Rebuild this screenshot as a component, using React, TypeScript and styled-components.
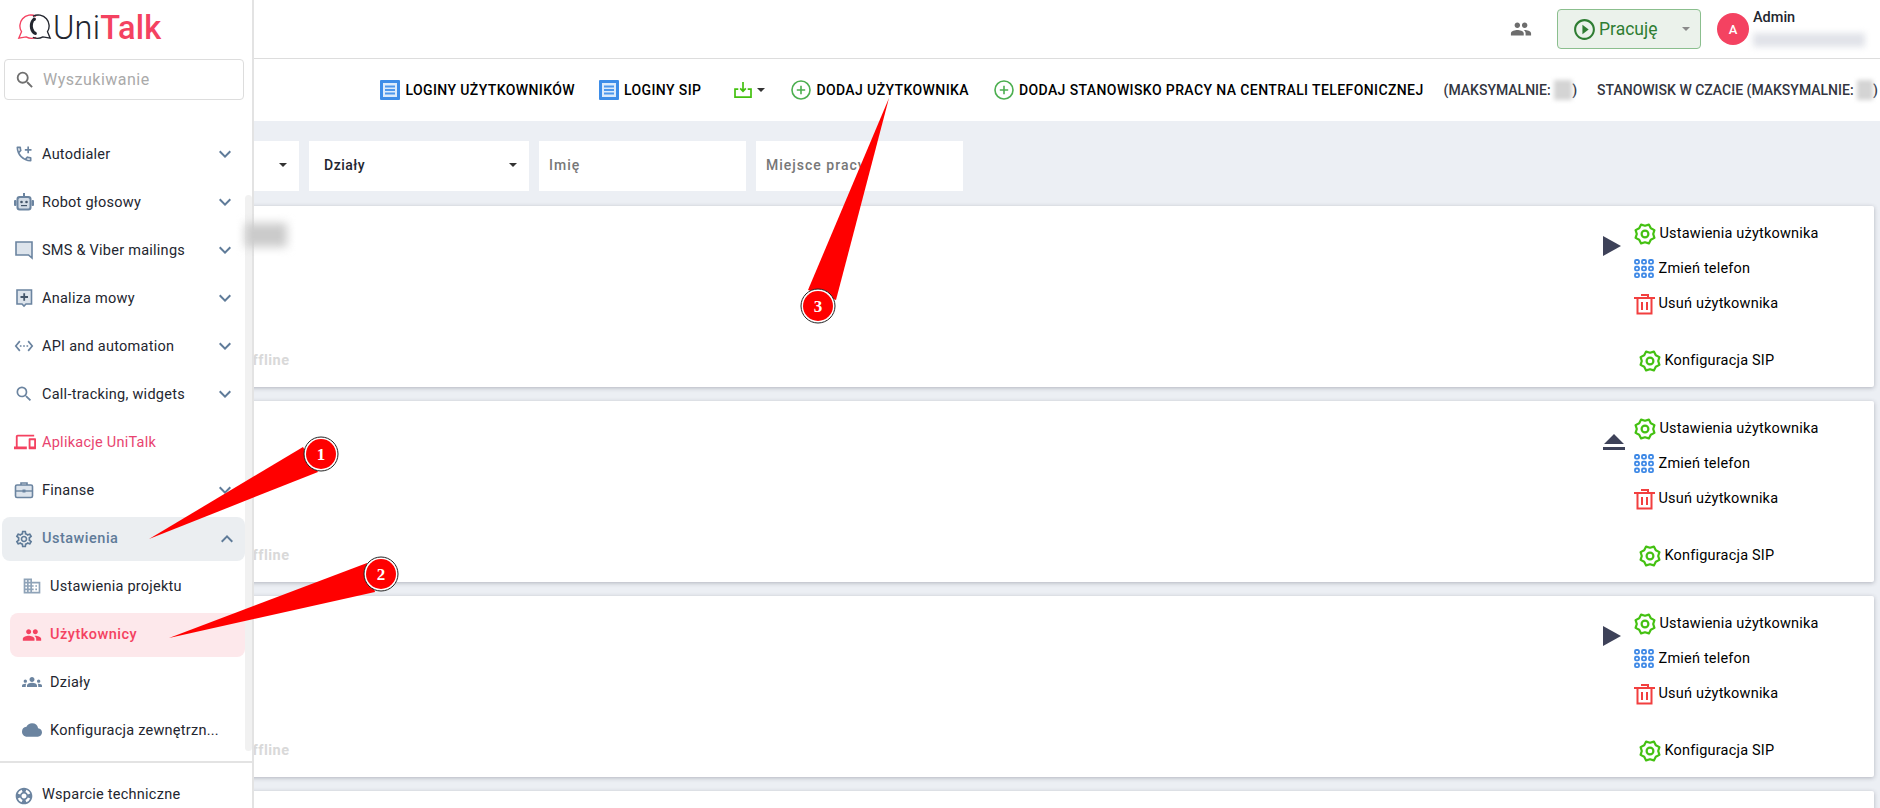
import React from 'react';
import styled, { createGlobalStyle } from 'styled-components';
import {
    MdOutlineAddIcCall, MdSettingsEthernet, MdSearch, MdOutlineDevices,
    MdOutlineSettings, MdBusiness, MdPeople, MdGroups, MdCloud, MdSupport, MdExpandMore, MdExpandLess,
    MdPlayCircleOutline,
} from 'react-icons/md';

const GlobalStyle = createGlobalStyle`
    html, body {
        margin: 0;
        padding: 0;
        height: 100%;
        background: #eceff4;
        font-family: Roboto, "Liberation Sans", sans-serif;
        color: #23262f;
    }
    * {
        box-sizing: border-box;
    }
`;

const Page = styled.div`
    position: relative;
    width: 100%;
    height: 100vh;
    overflow: hidden;
`;

const Sidebar = styled.aside`
    position: absolute;
    left: 0;
    top: 0;
    bottom: 0;
    width: 254px;
    background: #fff;
    border-right: 2px solid #e3e3e3;
    z-index: 2;
    display: flex;
    flex-direction: column;
`;

const LogoRow = styled.div`
    height: 59px;
    padding: 13px 0 0 17px;
    display: flex;
    align-items: flex-start;
    gap: 1px;
`;

const LogoText = styled.div`
    font-size: 32.5px;
    line-height: 30px;
    font-weight: 300;
    color: #23262f;
    letter-spacing: 0.2px;

    b {
        font-weight: 500;
        color: #f44261;
    }
`;

const SearchBox = styled.div`
    margin: 0 8px 0 4px;
    height: 41px;
    border: 1px solid #ddd;
    border-radius: 4px;
    display: flex;
    align-items: center;
    gap: 7px;
    padding-left: 9px;
    font-size: 16px;
    letter-spacing: 0.5px;
    color: #aaa;

    svg {
        color: #707070;
    }
`;

const Nav = styled.nav`
    margin-top: 30px;
    padding-right: 6px;
    flex: 1;
    display: flex;
    flex-direction: column;
    align-items: stretch;
`;

const NavItem = styled.div<{ $color?: string; $sub?: boolean; $active?: boolean; $open?: boolean }>`
    flex: none;
    height: ${(p) => (p.$open || p.$active ? '44px' : '48px')};
    margin: ${(p) => (p.$open || p.$active ? '3px 1px 1px ' + (p.$active ? '10px' : '2px') : '0')};
    padding-left: ${(p) => (p.$active ? '12px' : p.$sub ? '22px' : p.$open ? '12px' : '14px')};
    padding-right: ${(p) => (p.$open ? '11px' : '14px')};
    padding-bottom: ${(p) => (p.$open || p.$active ? '1px' : '0')};
    display: flex;
    align-items: center;
    gap: 8px;
    font-size: 14.5px;
    letter-spacing: ${(p) => (p.$active || p.$open ? '0.5px' : '0.25px')};
    font-weight: ${(p) => (p.$active || p.$open ? 500 : 400)};
    color: ${(p) => p.$color || '#23262f'};
    border-radius: 8px;
    background: ${(p) => (p.$active ? '#fde8eb' : p.$open ? '#ebeef1' : 'transparent')};

    > svg:first-child {
        flex: none;
        color: ${(p) => (p.$active ? '#f44261' : p.$color || '#6b84a0')};
    }
`;

const NavLabel = styled.span`
    flex: 1;
    white-space: nowrap;
`;

const Chevron = styled.span`
    display: flex;
    color: #5f7b99;
    margin-right: -5px;
`;

const SidebarFoot = styled.div`
    border-top: 2px solid #e3e3e3;
    height: 47px;
    padding: 23px 0 0 14px;
    display: flex;
    align-items: flex-start;
    gap: 8px;
    font-size: 14.5px;
    letter-spacing: 0.25px;

    svg {
        color: #6b84a0;
        flex: none;
    }
`;

const Scrollbar = styled.div`
    position: absolute;
    right: 0;
    top: 195px;
    width: 7px;
    height: 556px;
    border-radius: 4px;
    background: #f1f1f1;
`;

const Main = styled.main`
    display: flex;
    flex-direction: column;
`;

const Header = styled.header`
    height: 59px;
    background: #fff;
    border-bottom: 1px solid #ddd;
    display: flex;
    align-items: center;
    justify-content: flex-end;
    padding-right: 11px;
`;

const TeamIcon = styled.span`
    display: flex;
    color: #6d6d6d;
    margin-right: 25px;
`;

const StatusButton = styled.div`
    width: 144px;
    height: 40px;
    margin-right: 16px;
    display: flex;
    align-items: center;
    gap: 2px;
    padding: 0 10px 0 14px;
    background: #ebf2eb;
    border: 1px solid #8bbf8e;
    border-radius: 4px;
    color: #2e7d32;
    font-size: 17.5px;

    svg {
        flex: none;
    }

    span {
        flex: 1;
    }
`;

const Caret = styled.i<{ $color?: string; $size?: number }>`
    display: block;
    flex: none;
    width: 0;
    height: 0;
    border-left: ${(p) => p.$size || 4}px solid transparent;
    border-right: ${(p) => p.$size || 4}px solid transparent;
    border-top: ${(p) => p.$size || 4}px solid ${(p) => p.$color || '#333'};
`;

const Avatar = styled.div`
    width: 32px;
    height: 32px;
    border-radius: 50%;
    background: #f44261;
    color: #fff;
    font-size: 13px;
    font-weight: 500;
    display: flex;
    align-items: center;
    justify-content: center;
    margin-right: 4px;
`;

const UserBox = styled.div`
    width: 116px;
    height: 50px;
    padding-top: 5px;
    font-size: 14.5px;
    font-weight: 500;
`;

const BlurLine = styled.div`
    margin-top: 7px;
    width: 112px;
    height: 14px;
    background: #e1e3e9;
    filter: blur(3px);
`;

const Toolbar = styled.div`
    height: 62px;
    background: #fff;
    display: flex;
    align-items: center;
    justify-content: flex-end;
    padding-right: 2px;
    white-space: nowrap;
`;

const ToolButton = styled.div<{ $gap?: number; $left: number; $muted?: boolean }>`
    display: flex;
    align-items: center;
    gap: ${(p) => p.$gap ?? 5}px;
    margin-left: ${(p) => p.$left}px;
    font-size: 14px;
    font-weight: 500;
    letter-spacing: ${(p) => (p.$muted ? '0' : '0.4px')};
    color: ${(p) => (p.$muted ? '#33363f' : '#000')};

    svg {
        flex: none;
    }
`;

const Hidden = styled.span<{ $width: number }>`
    display: inline-block;
    width: ${(p) => p.$width}px;
    height: 20px;
    vertical-align: middle;
    background: #d4d4d4;
    filter: blur(2px);
`;

const Filters = styled.div`
    display: flex;
    gap: 10px;
    margin: 20px 0 15px 200px;
`;

const Filter = styled.div<{ $width: number; $muted?: boolean }>`
    width: ${(p) => p.$width}px;
    height: 50px;
    background: #fff;
    display: flex;
    align-items: center;
    justify-content: space-between;
    padding: 0 12px 2px 15px;
    font-size: 14px;
    font-weight: 500;
    letter-spacing: ${(p) => (p.$muted ? '1px' : '0.5px')};
    color: ${(p) => (p.$muted ? '#777' : '#23262f')};
    padding-left: ${(p) => (p.$muted ? '10px' : '15px')};
`;

const Cards = styled.div`
    display: flex;
    flex-direction: column;
    gap: 14px;
    margin: 0 6px 0 200px;
`;

const Card = styled.section`
    flex: none;
    height: 181px;
    background: #fff;
    border-radius: 2px;
    box-shadow: 0 1px 4px rgba(40, 44, 60, 0.3);
    display: flex;
`;

const CardInfo = styled.div`
    flex: 1;
    display: flex;
    align-items: flex-end;
    padding: 0 0 18px 42px;
    font-size: 14.5px;
    font-weight: 700;
    letter-spacing: 0.5px;
    color: #d9d9d9;
`;

const CardToggle = styled.div`
    width: 31px;
    display: flex;
    justify-content: flex-start;
`;

const Actions = styled.div`
    width: 240px;
    padding-top: 10px;
    display: flex;
    flex-direction: column;
`;

const Action = styled.div<{ $sip?: boolean }>`
    height: 35px;
    display: flex;
    align-items: center;
    gap: 3.5px;
    font-size: 14.5px;
    letter-spacing: 0.2px;
    color: #000;
    margin-top: ${(p) => (p.$sip ? '22px' : '0')};
    padding-left: ${(p) => (p.$sip ? '5px' : '0')};

    svg {
        flex: none;
    }
`;

const Annotations = styled.svg`
    position: absolute;
    left: 0;
    top: 0;
    z-index: 3;
    pointer-events: none;
`;

const NameBlur = styled.div`
    position: absolute;
    left: 245px;
    top: 223px;
    width: 42px;
    height: 24px;
    background: #cbcbcb;
    filter: blur(5px);
    z-index: 3;
`;

const gearPoints = (() => {
    const pts: string[] = [];
    for (let i = 0; i < 16; i++) {
        const a = (i * Math.PI) / 8 + Math.PI / 8;
        const r = i % 2 === 0 ? 10.2 : 8.2;
        pts.push(`${(11 + r * Math.sin(a)).toFixed(2)},${(11 - r * Math.cos(a)).toFixed(2)}`);
    }
    return pts.join(' ');
})();

const GreenGear = () => (
    <svg width="22" height="22" viewBox="0 0 22 22" fill="none" stroke="#44c112" strokeWidth="2.2" strokeLinejoin="round">
        <polygon points={gearPoints} />
        <circle cx="11" cy="11" r="3.4" />
    </svg>
);

const Keypad = () => (
    <svg width="21" height="20" viewBox="0 0 21 20" fill="none" stroke="#3d88e6" strokeWidth="1.8">
        {[1, 7.75, 14.5].map((y) =>
            [1, 8, 15].map((x) => <rect key={`${x}-${y}`} x={x} y={y} width="4" height="3.6" rx="1.2" />),
        )}
    </svg>
);

const Trash = () => (
    <svg width="21" height="22" viewBox="0 0 21 22" fill="none" stroke="#f23f3f" strokeWidth="2">
        <path d="M0 5h21M3.5 5v15.5h14V5M7 2h7v3M8 9v8M13 9v8" />
    </svg>
);

const PlayToggle = () => (
    <svg width="18" height="20" viewBox="0 0 18 20" style={{ marginTop: 30 }}>
        <polygon points="0,0 18,10 0,20" fill="#3e4259" />
    </svg>
);

const EjectToggle = () => (
    <svg width="22" height="17" viewBox="0 0 22 17" style={{ marginTop: 33 }}>
        <path d="M11 0l10 10H1zM0 13h22v3H0z" fill="#3e4259" />
    </svg>
);

const DocIcon = () => (
    <svg width="20" height="20" viewBox="0 0 20 20">
        <rect width="20" height="20" rx="1" fill="#3d8de8" />
        <rect x="3" y="3" width="14" height="14" fill="#dcebfb" />
        <path d="M5 6.5h10M5 10h10M5 13.5h10" stroke="#4d97ec" strokeWidth="2" />
    </svg>
);

const PlusCircle = () => (
    <svg width="20" height="20" viewBox="0 0 20 20" fill="none" stroke="#4caf50" strokeWidth="1.6">
        <circle cx="10" cy="10" r="9" />
        <path d="M5.8 10h8.4M10 5.8v8.4" />
    </svg>
);

const ImportIcon = () => (
    <svg width="18" height="16" viewBox="0 0 19 17" fill="none" stroke="#43c10f" strokeWidth="1.8">
        <path d="M4.5 7.5H1v8.5h17V7.5h-3.5M9.5 0v9.5M6.5 6.8l3 3 3-3" />
    </svg>
);

const LogoMark = () => (
    <svg width="35" height="27" viewBox="0 0 33 26" fill="none" strokeWidth="1.3">
        <path d="M18 3.2A10.5 10.5 0 0 0 5 5.5C2 8.8 1.6 14.5 4 18l-2.6 6.2 7-1.2c3 1.6 6.6 1.8 9.6.4" stroke="#f44261" />
        <path d="M15 3.2a10.5 10.5 0 0 1 13 2.3c3 3.3 3.4 9 1 12.5l2.6 6.2-7-1.2c-3 1.6-6.6 1.8-9.6.4" stroke="#23262f" />
        <path d="M15.5 4.5c-3.5 2.5-5 9-1.5 14.5 1 1.5 3.5 3 4.5 1.8 1-1-.5-3-1.8-3.2-2.2-2.8-2.4-6.8-.7-9.6 1.6-.2 2.5-2.2 1.5-3.2-.6-.6-1.6-.7-2.5-.3z" fill="#23262f" />
    </svg>
);

// these menu glyphs are two tone, the icon packages only have them flat
const RobotIcon = () => (
    <svg width="20" height="20" viewBox="0 0 20 20">
        <path d="M9 1h2v3H9z" fill="#6b84a0" />
        <rect x="0" y="8" width="2.5" height="6" rx="1" fill="#6b84a0" />
        <rect x="17.5" y="8" width="2.5" height="6" rx="1" fill="#6b84a0" />
        <rect x="2.5" y="4" width="15" height="14.5" rx="3" fill="#6b84a0" />
        <rect x="4.5" y="6" width="11" height="10.5" rx="1.5" fill="#d3dce6" />
        <circle cx="7.5" cy="10" r="1.3" fill="#43556a" />
        <circle cx="12.5" cy="10" r="1.3" fill="#43556a" />
        <path d="M7 13.6h6" stroke="#43556a" strokeWidth="1.2" />
    </svg>
);

const ChatIcon = () => (
    <svg width="20" height="20" viewBox="-1 -1 20 20">
        <path d="M1 1h16v16l-3.5-3H1z" fill="#dde4ec" stroke="#6b84a0" strokeWidth="1.6" />
    </svg>
);

const SpeechIcon = () => (
    <svg width="20" height="20" viewBox="-1 -1 20 20">
        <path d="M2 1h14.5v14H11l-2 2-2-2H2z" fill="#dde4ec" stroke="#6b84a0" strokeWidth="1.6" />
        <path d="M5.5 8h7.5M9.2 4.3v7.4" stroke="#43556a" strokeWidth="1.8" />
    </svg>
);

const CaseIcon = () => (
    <svg width="20" height="20" viewBox="0 0 20 20">
        <path d="M7 5V3h6v2" fill="none" stroke="#6b84a0" strokeWidth="1.6" />
        <rect x="1.5" y="5" width="17" height="12.5" rx="1.5" fill="#dde4ec" stroke="#6b84a0" strokeWidth="1.6" />
        <path d="M1.5 11h17" stroke="#6b84a0" strokeWidth="1.4" />
        <rect x="8.5" y="9.5" width="3" height="3" fill="#6b84a0" />
    </svg>
);

const menuTop = [
    { label: 'Autodialer', icon: <MdOutlineAddIcCall size={20} /> },
    { label: 'Robot głosowy', icon: <RobotIcon /> },
    { label: 'SMS & Viber mailings', icon: <ChatIcon /> },
    { label: 'Analiza mowy', icon: <SpeechIcon /> },
    { label: 'API and automation', icon: <MdSettingsEthernet size={20} /> },
    { label: 'Call-tracking, widgets', icon: <MdSearch size={20} /> },
];

const UserCard = ({ toggle }: { toggle: React.ReactNode }) => (
    <Card>
        <CardInfo>Offline</CardInfo>
        <CardToggle>{toggle}</CardToggle>
        <Actions>
            <Action><GreenGear />Ustawienia użytkownika</Action>
            <Action><Keypad />Zmień telefon</Action>
            <Action><Trash />Usuń użytkownika</Action>
            <Action $sip><GreenGear />Konfiguracja SIP</Action>
        </Actions>
    </Card>
);

const Badge = ({ x, y, n }: { x: number; y: number; n: number }) => (
    <g>
        <circle cx={x} cy={y} r="17" fill="#fff" stroke="#222" strokeWidth="1" />
        <circle cx={x} cy={y} r="15" fill="#f00" />
        <text x={x} y={y + 6} textAnchor="middle" fontFamily="Liberation Serif, serif" fontWeight="700" fontSize="17" fill="#fff">{n}</text>
    </g>
);

const App = () => (
    <Page>
        <GlobalStyle />
        <Main>
            <Header>
                <TeamIcon><MdPeople size={22} /></TeamIcon>
                <StatusButton>
                    <MdPlayCircleOutline size={25} />
                    <span>Pracuję</span>
                    <Caret $color="#8a8a8a" />
                </StatusButton>
                <Avatar>A</Avatar>
                <UserBox>
                    Admin
                    <BlurLine />
                </UserBox>
            </Header>
            <Toolbar>
                <ToolButton $left={0}><DocIcon />LOGINY UŻYTKOWNIKÓW</ToolButton>
                <ToolButton $left={24}><DocIcon />LOGINY SIP</ToolButton>
                <ToolButton $left={33}><ImportIcon /><Caret $size={4} /></ToolButton>
                <ToolButton $left={26}><PlusCircle />DODAJ UŻYTKOWNIKA</ToolButton>
                <ToolButton $left={25}><PlusCircle />DODAJ STANOWISKO PRACY NA CENTRALI TELEFONICZNEJ</ToolButton>
                <ToolButton $left={20} $gap={0} $muted>(MAKSYMALNIE:&nbsp;<Hidden $width={18} />)</ToolButton>
                <ToolButton $left={20} $gap={0} $muted>STANOWISK W CZACIE (MAKSYMALNIE:&nbsp;<Hidden $width={16} />)</ToolButton>
            </Toolbar>
            <Filters>
                <Filter $width={99}><span /><Caret /></Filter>
                <Filter $width={220}>Działy<Caret /></Filter>
                <Filter $width={207} $muted>Imię</Filter>
                <Filter $width={207} $muted>Miejsce pracy</Filter>
            </Filters>
            <Cards>
                <UserCard toggle={<PlayToggle />} />
                <UserCard toggle={<EjectToggle />} />
                <UserCard toggle={<PlayToggle />} />
                <Card />
            </Cards>
        </Main>

        <Sidebar>
            <LogoRow>
                <LogoMark />
                <LogoText>Uni<b>Talk</b></LogoText>
            </LogoRow>
            <SearchBox><MdSearch size={22} />Wyszukiwanie</SearchBox>
            <Nav>
                {menuTop.map((item) => (
                    <NavItem key={item.label}>
                        {item.icon}
                        <NavLabel>{item.label}</NavLabel>
                        <Chevron><MdExpandMore size={24} /></Chevron>
                    </NavItem>
                ))}
                <NavItem $color="#e8436f">
                    <MdOutlineDevices size={22} style={{ marginRight: -2, color: '#f44261' }} />
                    <NavLabel>Aplikacje UniTalk</NavLabel>
                </NavItem>
                <NavItem>
                    <CaseIcon />
                    <NavLabel>Finanse</NavLabel>
                    <Chevron><MdExpandMore size={24} /></Chevron>
                </NavItem>
                <NavItem $open $color="#5f7b99">
                    <MdOutlineSettings size={20} />
                    <NavLabel>Ustawienia</NavLabel>
                    <Chevron><MdExpandLess size={24} /></Chevron>
                </NavItem>
                <NavItem $sub>
                    <MdBusiness size={20} style={{ color: '#8fa3b8' }} />
                    <NavLabel>Ustawienia projektu</NavLabel>
                </NavItem>
                <NavItem $active $sub $color="#f44261">
                    <MdPeople size={20} />
                    <NavLabel>Użytkownicy</NavLabel>
                </NavItem>
                <NavItem $sub>
                    <MdGroups size={20} />
                    <NavLabel>Działy</NavLabel>
                </NavItem>
                <NavItem $sub>
                    <MdCloud size={20} />
                    <NavLabel>Konfiguracja zewnętrzn...</NavLabel>
                </NavItem>
            </Nav>
            <SidebarFoot>
                <MdSupport size={20} />
                Wsparcie techniczne
            </SidebarFoot>
            <Scrollbar />
        </Sidebar>

        <NameBlur />
        <Annotations width="1880" height="808" viewBox="0 0 1880 808">
            <polygon points="149,539 303,447 318,472" fill="#f00" />
            <polygon points="169,638 367,563 375,592" fill="#f00" />
            <polygon points="889,98 808,290 836,300" fill="#f00" />
            <Badge x={321} y={454} n={1} />
            <Badge x={381} y={574} n={2} />
            <Badge x={818} y={306} n={3} />
        </Annotations>
    </Page>
);

export default App;
